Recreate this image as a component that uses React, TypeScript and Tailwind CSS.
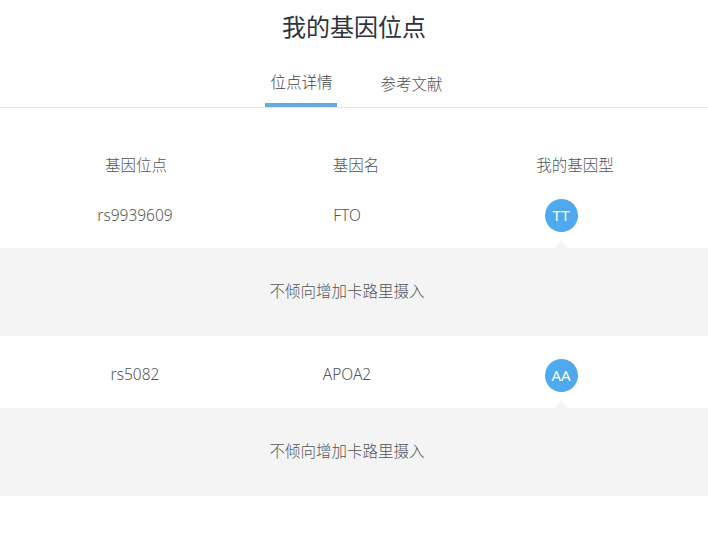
import React from "react";

const rows = [
  { snp: "rs9939609", gene: "FTO", genotype: "TT", note: "不倾向增加卡路里摄入" },
  { snp: "rs5082", gene: "APOA2", genotype: "AA", note: "不倾向增加卡路里摄入" },
];

export default function App() {
  return (
    <div
      className="w-[708px] h-[536px] bg-white overflow-hidden"
      style={{ fontFamily: '"Noto Sans", "Noto Sans CJK SC", sans-serif' }}
    >
      {/* Title */}
      <h1 className="pt-[10px] text-center text-[24px] leading-[34px] font-normal text-[#2c3440]">
        我的基因位点
      </h1>

      {/* Tabs */}
      <div className="mt-[28px] border-b border-[#e6e6e6] flex justify-center">
        <div className="flex ml-[0px]">
          <div className="w-[72px] flex flex-col items-center">
            <span className="text-[15.5px] leading-[20px] font-light text-[#444]">位点详情</span>
            <span className="mt-[11px] h-[4px] w-full bg-[#64abdc]" />
          </div>
          <div className="ml-[43px]">
            <span className="text-[15.5px] leading-[20px] font-light text-[#555]">参考文献</span>
          </div>
        </div>
      </div>

      {/* Table header */}
      <div className="mt-[47px] grid grid-cols-[270px_160px_278px] text-[15.5px] leading-[20px] font-light text-[#555]">
        <div className="text-center pl-[2px]">基因位点</div>
        <div className="text-center pl-[12px]">基因名</div>
        <div className="text-center pl-[12px]">我的基因型</div>
      </div>

      {rows.map((r, i) => (
        <div key={r.snp}>
          <div
            className={`grid grid-cols-[270px_160px_278px] items-center text-[15.5px] font-light text-[#555] ${
              i === 0 ? "h-[73px] pt-[8px]" : "h-[72px] pt-[6px]"
            }`}
          >
            <div className="text-center">{r.snp}</div>
            <div className="text-center pr-[6px]">{r.gene}</div>
            <div className="flex justify-center pr-[16px] relative h-full items-center">
              <span className="w-[33px] h-[33px] rounded-full bg-[#4ea9ee] text-white text-[15px] font-normal flex items-center justify-center">
                {r.genotype}
              </span>
              <span className="absolute bottom-0 left-[124px] w-0 h-0 border-l-[7px] border-r-[7px] border-b-[7px] border-l-transparent border-r-transparent border-b-[#f4f4f4]" />
            </div>
          </div>
          <div className="h-[88px] bg-[#f4f4f4] flex items-center justify-center text-[15.5px] font-light text-[#555] pr-[14px]">
            {r.note}
          </div>
        </div>
      ))}
    </div>
  );
}
